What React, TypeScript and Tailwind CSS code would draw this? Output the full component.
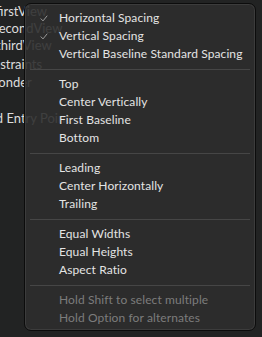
import { Fragment } from "react";

type Item = { label: string; checked?: boolean; disabled?: boolean };

const SECTIONS: Item[][] = [
  [
    { label: "Horizontal Spacing", checked: true },
    { label: "Vertical Spacing", checked: true },
    { label: "Vertical Baseline Standard Spacing" },
  ],
  [{ label: "Top" }, { label: "Center Vertically" }, { label: "First Baseline" }, { label: "Bottom" }],
  [{ label: "Leading" }, { label: "Center Horizontally" }, { label: "Trailing" }],
  [{ label: "Equal Widths" }, { label: "Equal Heights" }, { label: "Aspect Ratio" }],
  [
    { label: "Hold Shift to select multiple", disabled: true },
    { label: "Hold Option for alternates", disabled: true },
  ],
];

const OUTLINE = [
  { label: "firstView", cls: "-ml-[4px] h-[17px]" },
  { label: "secondView", cls: "-ml-[7px] h-[17px]" },
  { label: "thirdView", cls: "-ml-[4px] h-[17px]" },
  { label: "Constraints", cls: "-ml-[23px] mt-[2px] h-[18px]" },
  { label: "First Responder", cls: "-ml-[58px] h-[18px]" },
  { label: "", cls: "h-[18px]" },
  { label: "Storyboard Entry Point", cls: "-ml-[60px] h-[18px]" },
];

function Check() {
  return (
    <svg width="8" height="7" viewBox="0 0 8 7" fill="none" className="text-[#9a9a9a]">
      <path d="M1 3.8 L3 5.9 L7 1" stroke="currentColor" strokeWidth="1" strokeLinecap="round" strokeLinejoin="round" />
    </svg>
  );
}

export default function App() {
  return (
    <div className="relative h-[337px] w-[262px] overflow-hidden bg-[#222323] font-['Lato',sans-serif] text-[13px]">
      <ul className="flex flex-col pt-[3px]">
        {OUTLINE.map((row, i) => (
          <li key={i} className={`flex items-center whitespace-nowrap text-[#dcdcdc] ${row.cls}`}>
            {row.label}
          </li>
        ))}
      </ul>

      <div className="absolute left-[24px] top-[3px] w-[232px] rounded-[7px] border border-[#0c0c0c] bg-[#2e2e2e]/[0.9] px-[4px] pb-[3px] pt-[5px] text-[12px] tracking-[0.1px] shadow-[inset_0_0_0_1px_#3c3c3c]">
        {SECTIONS.map((section, si) => (
          <Fragment key={si}>
            {si > 0 ? <div className="mx-[1px] my-[5.5px] h-px bg-[#464646]" /> : null}
            {section.map((item) => (
              <div
                key={item.label}
                className={`flex h-[18px] items-center whitespace-nowrap ${item.disabled ? "text-[#7c7c7c]" : "text-[#e4e4e4]"}`}
              >
                <span className="flex w-[30px] shrink-0 justify-end pr-[11px]">{item.checked ? <Check /> : null}</span>
                <span>{item.label}</span>
              </div>
            ))}
          </Fragment>
        ))}
      </div>
    </div>
  );
}
